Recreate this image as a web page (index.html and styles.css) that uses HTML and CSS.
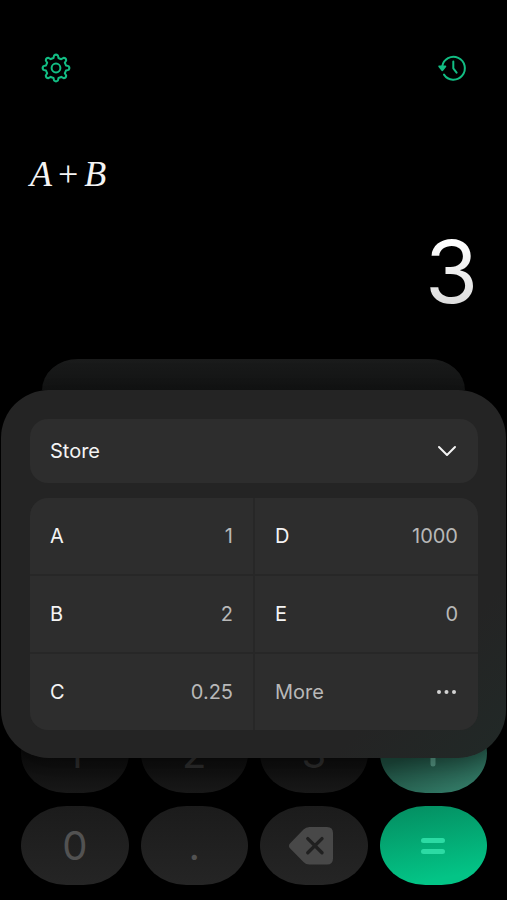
FILE: index.html
```html
<!DOCTYPE html>
<html lang="en">
<head>
<meta charset="utf-8">
<meta name="viewport" content="width=device-width, initial-scale=1">
<title>Calculator</title>
<link rel="stylesheet" href="styles.css">
</head>
<body>
<main class="calculator">
  <header class="toolbar">
    <button class="tool" type="button" aria-label="Settings">
      <svg width="32" height="32" viewBox="0 0 32 32" fill="none" stroke="currentColor" stroke-width="2" stroke-linejoin="round">
        <path d="M13.5 6 L14.1 3.4 Q16 1.8 17.9 3.4 L18.5 6 Q20 6.8 21.3 7.2 L23.6 5.8 Q26.1 5.9 26.2 8.4 L24.8 10.7 Q25.5 12 26 13.5 L28.6 14.1 Q30.2 16 28.6 17.9 L26 18.5 Q25.5 20 24.8 21.3 L26.2 23.6 Q26.1 26.1 23.6 26.2 L21.3 24.8 Q20 25.5 18.5 26 L17.9 28.6 Q16 30.2 14.1 28.6 L13.5 26 Q12 25.5 10.7 24.8 L8.4 26.2 Q5.9 26.1 5.8 23.6 L7.2 21.3 Q6.5 20 6 18.5 L3.4 17.9 Q1.8 16 3.4 14.1 L6 13.5 Q6.5 12 7.2 10.7 L5.8 8.4 Q5.9 5.9 8.4 5.8 L10.7 7.2 Q12 6.5 13.5 6 Z"/>
        <circle cx="16" cy="16" r="4.4"/>
      </svg>
    </button>
    <button class="tool" type="button" aria-label="History">
      <svg width="32" height="32" viewBox="0 0 32 32" fill="none" stroke="currentColor" stroke-width="2" stroke-linecap="round" stroke-linejoin="round">
        <path d="M5.2 14.5 A11.4 11.4 0 1 1 7 22.6"/>
        <path d="M16.3 9.5 V16.3 L19.6 20.6"/>
        <path d="M2.3 14.4 H8.3 L5.3 18.2 Z" fill="currentColor"/>
      </svg>
    </button>
  </header>

  <section class="display">
    <p class="expression">A<span class="operator">+</span>B</p>
    <output class="result">3</output>
  </section>

  <section class="keypad">
    <button class="key covered" type="button">1</button>
    <button class="key covered" type="button">2</button>
    <button class="key covered" type="button">3</button>
    <button class="key plus" type="button" aria-label="Plus">
      <svg width="26" height="30" viewBox="0 0 26 30" stroke="currentColor" stroke-width="5" stroke-linecap="round"><path d="M13 4 V25 M3 14.5 H23"/></svg>
    </button>
    <button class="key" type="button">0</button>
    <button class="key" type="button">.</button>
    <button class="key" type="button" aria-label="Delete">
      <svg width="52" height="40" viewBox="0 0 52 40">
        <path d="M2.2 17.2 L15.5 3.6 Q17.8 1 21.5 1 H39 Q45 1 45 7 V32.5 Q45 38.5 39 38.5 H21.5 Q17.8 38.5 15.5 36 L2.2 22.6 Q-.4 19.9 2.2 17.2 Z" fill="#484848"/>
        <path d="M19.8 12.6 L34 26.8 M34 12.6 L19.8 26.8" stroke="#202020" stroke-width="3.4" stroke-linecap="round"/>
      </svg>
    </button>
    <button class="key equals" type="button" aria-label="Equals">
      <svg width="26" height="20" viewBox="0 0 26 20" stroke="currentColor" stroke-width="5" stroke-linecap="round"><path d="M3.5 4.5 H22.5 M3.5 15.5 H22.5"/></svg>
    </button>
  </section>

  <section class="sheet-stack">
    <div class="sheet-behind"></div>
    <div class="sheet">
      <div class="mode">
        <select class="mode-select" aria-label="Variable action">
          <option>Store</option>
        </select>
        <svg class="chevron" width="20" height="12" viewBox="0 0 20 12" fill="none" stroke="currentColor" stroke-width="2" stroke-linecap="round" stroke-linejoin="round"><path d="M2 2 L10 10 L18 2"/></svg>
      </div>
      <div class="variables">
        <button class="variable" type="button"><span class="name">A</span><span>1</span></button>
        <button class="variable" type="button"><span class="name">D</span><span>1000</span></button>
        <button class="variable" type="button"><span class="name">B</span><span>2</span></button>
        <button class="variable" type="button"><span class="name">E</span><span>0</span></button>
        <button class="variable" type="button"><span class="name">C</span><span>0.25</span></button>
        <button class="variable" type="button"><span>More</span>
          <svg width="22" height="6" viewBox="0 0 22 6" fill="#d2d2d2"><circle cx="3" cy="3" r="2"/><circle cx="10.5" cy="3" r="2"/><circle cx="18" cy="3" r="2"/></svg>
        </button>
      </div>
    </div>
  </section>
</main>
</body>
</html>
```
FILE: styles.css
```css
* {
  box-sizing: border-box;
}

body {
  margin: 0;
  background: #000;
  color: #f4f4f4;
  font-family: Inter, "Liberation Sans", sans-serif;
}

button,
select {
  margin: 0;
  padding: 0;
  border: 0;
  background: none;
  color: inherit;
  font: inherit;
}

svg {
  display: block;
}

.calculator {
  position: relative;
  display: flex;
  flex-direction: column;
  min-height: 100vh;
}

.toolbar {
  display: flex;
  justify-content: space-between;
  padding: 52px 38px 0 40px;
}

.tool {
  color: #12bd83;
}

.display {
  display: flex;
  flex-direction: column;
  padding: 70px 29px 0 30px;
}

.expression {
  margin: 0;
  font: italic 36px/40px "Liberation Serif", serif;
}

.operator {
  margin: 0 6px;
  font-style: normal;
}

.result {
  align-self: flex-end;
  margin-top: 28px;
  font-size: 86px;
  line-height: 100px;
  background: linear-gradient(#fff 20%, #d8d8d8 90%);
  background-clip: text;
  color: transparent;
}

.keypad {
  display: grid;
  grid-template-columns: repeat(4, 1fr);
  gap: 13px 12px;
  margin-top: auto;
  padding: 0 20px 15px 21px;
}

.key {
  display: flex;
  align-items: center;
  justify-content: center;
  height: 79px;
  border-radius: 46px / 40px;
  background: linear-gradient(#1b1b1b, #252525);
  color: #525252;
  font-size: 40px;
}

.covered {
  background: linear-gradient(#0b0b0b 50%, #191919);
  color: #2c2c2c;
}

.plus {
  background: linear-gradient(160deg, #1d4a3d 45%, #388570);
  color: #52917f;
}

.equals {
  background: linear-gradient(170deg, #048f62 5%, #03c486 85%);
  color: #2cdba4;
}

.sheet-stack {
  position: absolute;
  right: 1px;
  bottom: 142px;
  left: 1px;
}

.sheet-behind {
  height: 31px;
  margin: 0 41px;
  border-radius: 36px 36px 0 0 / 31px 31px 0 0;
  background: linear-gradient(#1a1b1b, #131414);
}

.sheet {
  display: grid;
  gap: 15px;
  padding: 29px 28px 28px 29px;
  border-radius: 48px;
  background: linear-gradient(135deg, #242424 80%, #212927);
  box-shadow: 0 4px 28px rgba(0, 0, 0, 0.4);
}

.mode {
  position: relative;
}

.mode-select {
  width: 100%;
  height: 64px;
  padding: 0 20px;
  border-radius: 18px;
  background: #2d2d2d;
  font-size: 20px;
  appearance: none;
}

.chevron {
  position: absolute;
  top: 26px;
  right: 21px;
  pointer-events: none;
}

.variables {
  display: grid;
  grid-template-columns: repeat(2, 1fr);
  gap: 2px;
  overflow: hidden;
  border-radius: 18px;
  background: #272727;
}

.variable {
  display: flex;
  align-items: center;
  justify-content: space-between;
  height: 76px;
  padding: 0 20px;
  background: #2d2d2d;
  color: #b8b8b8;
  font-size: 20px;
}

.name {
  color: #f4f4f4;
}
```
